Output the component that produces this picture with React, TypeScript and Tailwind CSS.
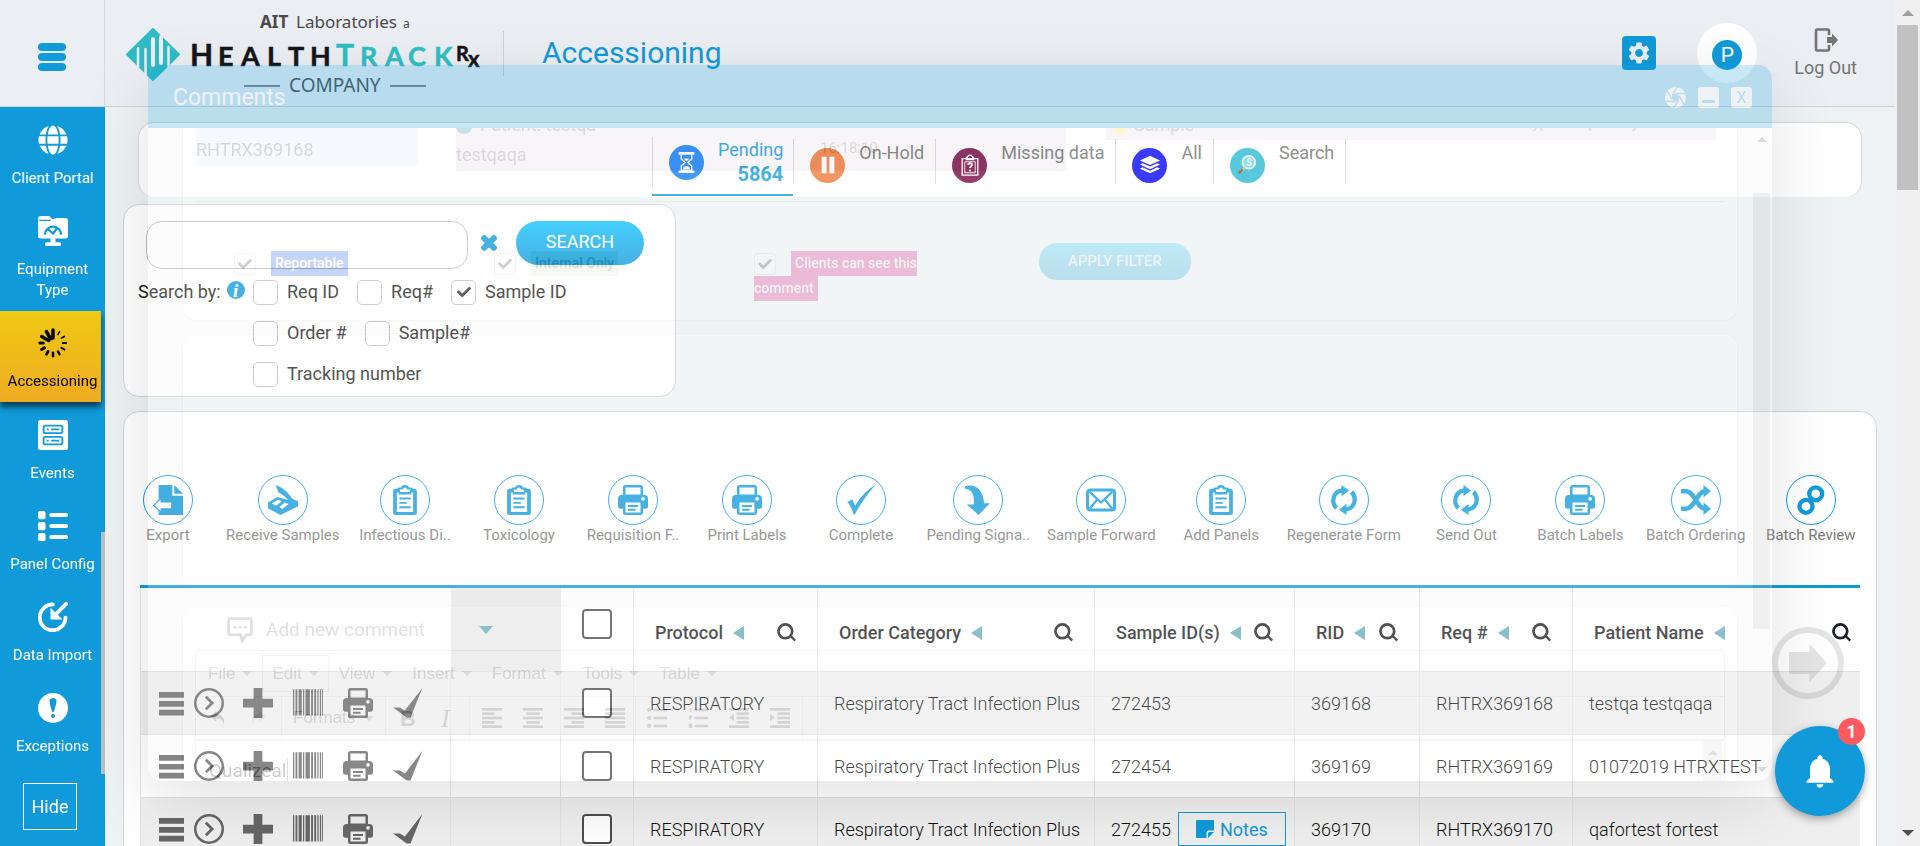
import type { ReactNode } from "react";
import { FaGlobe, FaTimes, FaCheck } from "react-icons/fa";
import { MdSettings, MdNotifications } from "react-icons/md";

/* ---------- icons ---------- */

type IconProps = { className?: string };

const Svg = ({ className, children, box = 24 }: IconProps & { children: ReactNode; box?: number }) => (
  <svg viewBox={`0 0 ${box} ${box}`} className={className} fill="currentColor" aria-hidden="true">
    {children}
  </svg>
);

const Printer = ({ className }: IconProps) => (
  <Svg className={className}>
    <path d="M6 0h12a2 2 0 0 1 2 2v6h1a3 3 0 0 1 3 3v6a2 2 0 0 1-2 2h-2v3a2 2 0 0 1-2 2H6a2 2 0 0 1-2-2v-3H2a2 2 0 0 1-2-2v-6a3 3 0 0 1 3-3h1V2a2 2 0 0 1 2-2Zm0 2v5.500h12V2Zm0 12v8h12v-8Zm14-4.500a1.500 1.500 0 1 0 0 3 1.500 1.500 0 0 0 0-3Z" fillRule="evenodd" />
    <path d="M8 16h8v1.500H8zM8 19h6v1.500H8z" />
  </Svg>
);

const Clipboard = ({ className }: IconProps) => (
  <Svg className={className}>
    <path fillRule="evenodd" d="M9 2a3 2 0 0 1 6 0h2a1 1 0 0 1 1 1h1.500A2 2 0 0 1 21.500 5v17a2 2 0 0 1-2 2h-15a2 2 0 0 1-2-2V5a2 2 0 0 1 2-2H6a1 1 0 0 1 1-1ZM8 3.500v2h8v-2h-2.500a1.500 1.500 0 0 0-3 0ZM5.500 6v15.500h13V6h-1.500v1.500H7V6Z" />
    <path d="M7.500 10h9v1.500h-9zM7.500 13.500h6V15h-6zM7.500 17h9v1.500h-9z" />
  </Svg>
);

const Refresh = ({ className }: IconProps) => (
  <Svg className={className}>
    <path d="M10.500 4.300C3 5.500 1.500 14 6 18.500" fill="none" stroke="currentColor" strokeWidth="3.400" />
    <path d="M13.500 19.700C21 18.500 22.500 10 18 5.500" fill="none" stroke="currentColor" strokeWidth="3.400" />
    <path d="M10 0 16 4.300 10 9ZM14 24 8 19.700l6-4.700Z" />
  </Svg>
);

const Check = ({ className }: IconProps) => (
  <Svg className={className}>
    <path d="M1 13.500 5 11.500l2.500 5C11 10 17 3.500 23.500 0 17 7.500 11.500 15 7 23.500H6C4.800 19.500 3.500 16 1 13.500Z" />
  </Svg>
);

const RowCheck = ({ className }: IconProps) => (
  <Svg className={className}>
    <path d="M0 15.500h5.500L9.500 18 23.500 0 14 23.500H11Z" />
  </Svg>
);

const Scanner = ({ className }: IconProps) => (
  <Svg className={className}>
    <path d="M6 0c6 2 10 6 13.500 11l4.500 2v4L10 24 0 18.500V14l7.500-4.500L16 12C14 9.500 12 8 8.500 6Z" />
    <path d="m3 14.800 5-3 3 1.200-4.500 3.500ZM9 17.500l4.500-3.500 3 1.200-5 4Z" fill="#fff" />
  </Svg>
);

const ExportFile = ({ className }: IconProps) => (
  <Svg className={className}>
    <path d="M4.500 0h11v8.500H24V24H4.500ZM17 0l7 7h-7Z" />
    <path d="M.6 16.300 6.500 10.500v3h8.500v5.600H6.500v3Z" fill="#fff" stroke="currentColor" strokeWidth="1" />
  </Svg>
);

const DownArrow = ({ className }: IconProps) => (
  <Svg className={className}>
    <path d="M1.500 1C9 -1 15.500 2 17 14.500h4.500L12.500 24 3 15.500h5.500C9.500 9 7.500 3 1.500 3Z" />
  </Svg>
);

const Envelope = ({ className }: IconProps) => (
  <Svg className={className}>
    <rect x="1.200" y="4" width="21.600" height="16" rx="2" fill="none" stroke="currentColor" strokeWidth="2.400" />
    <path d="m3 5.500 9 8.500 9-8.500M3 19l6-7.500M21 19l-6-7.500" fill="none" stroke="currentColor" strokeWidth="1.800" />
  </Svg>
);

const Shuffle = ({ className }: IconProps) => (
  <Svg className={className}>
    <path d="M0 5h4c7 0 9 14 15 14M0 19h4C11 19 13 5 19 5" fill="none" stroke="currentColor" strokeWidth="3.600" />
    <path d="M18 0l6 5-6 5ZM18 14l6 5-6 5Z" />
  </Svg>
);

const Links = ({ className }: IconProps) => (
  <Svg className={className}>
    <circle cx="15.800" cy="7" r="5.200" fill="none" stroke="currentColor" strokeWidth="3.400" />
    <circle cx="8" cy="17" r="5.200" fill="none" stroke="currentColor" strokeWidth="3.400" />
  </Svg>
);

const Magnifier = ({ className }: IconProps) => (
  <Svg className={className}>
    <circle cx="10.500" cy="10.500" r="8.700" fill="none" stroke="currentColor" strokeWidth="3.400" />
    <path d="m15.500 16.500 2-2L24 21l-2 2.500Z" />
  </Svg>
);

const SearchCoin = ({ className }: IconProps) => (
  <Svg className={className}>
    <circle cx="14" cy="9" r="7" fill="#6fd3e8" stroke="#e4f4f8" strokeWidth="2" />
    <path d="m9 13.500 1.800 1.800-4.500 4.500-2-2Z" fill="#d9b44a" />
    <path d="m6.500 16 1.500 1.500-4 4.500-2-2Z" fill="#8a4526" />
    <text x="14" y="13" textAnchor="middle" fontSize="11" fontWeight="700" fill="#e4f4f8" fontFamily="Roboto, sans-serif">$</text>
  </Svg>
);

const Hourglass = ({ className }: IconProps) => (
  <Svg className={className}>
    <path d="M3 0h18v3H3zM3 21h18v3H3z" />
    <path d="M6 3v5l4.500 4L6 16v5h12v-5l-4.500-4L18 8V3" fill="none" stroke="currentColor" strokeWidth="1.500" />
    <path d="m8.500 7.500 3.500 3 3.500-3ZM8 20c0-3 2-4 4-4s4 1 4 4Z" />
  </Svg>
);

const Pause = ({ className }: IconProps) => (
  <Svg className={className}>
    <path d="M5 3h5.500v18H5zM13.500 3H19v18h-5.500z" />
  </Svg>
);

const MissingData = ({ className }: IconProps) => (
  <Svg className={className}>
    <path d="M3.500 5h17v18h-17zM8 5c0-2 2-2 2.500-3.500h3C14 3 16 3 16 5v1H8Z" fill="none" stroke="currentColor" strokeWidth="1.500" />
    <path d="M6.300 8.500h11.400v12H6.300z" fill="none" stroke="currentColor" strokeWidth="1" />
    <path d="M10 12c0-2.500 4.200-2.500 4.200 0 0 1.500-2.200 1.300-2.200 3.300" fill="none" stroke="currentColor" strokeWidth="2" />
    <circle cx="12" cy="18" r="1.200" />
  </Svg>
);

const Layers = ({ className }: IconProps) => (
  <Svg className={className}>
    <path d="m12 2 11 5-11 5L1 7Z" />
    <path d="m4 10-3 1.500 11 5 11-5L20 10l-8 3.700Z" />
    <path d="m4 14.500-3 1.500 11 5 11-5-3-1.500-8 3.700Z" />
  </Svg>
);

const Equipment = ({ className }: IconProps) => (
  <Svg className={className}>
    <path fillRule="evenodd" d="M0 2a2 2 0 0 1 2-2h7l2.500 2.500H12l3-1h7a2 2 0 0 1 2 2V16a2 2 0 0 1-2 2h-8v3h3a1.500 1.500 0 0 1 0 3H7a1.500 1.500 0 0 1 0-3h3v-3H2a2 2 0 0 1-2-2Z" />
    <path d="M5.500 15a6.500 6.500 0 1 1 13 0M7.500 10l4.500 4 3-4" fill="none" stroke="#119ad9" strokeWidth="1.800" />
    <path d="M1 3.500h9" stroke="#119ad9" strokeWidth="1" />
  </Svg>
);

const spokes = [0, 1, 2, 3, 4, 5, 6, 7, 8, 9, 10, 11];
const Spinner = ({ className }: IconProps) => (
  <Svg className={className}>
    {spokes.map((n) => (
      <line
        key={n}
        x1="12"
        y1="1.500"
        x2="12"
        y2={n === 0 || n > 9 ? 8 : 4.2}
        stroke="currentColor"
        strokeLinecap="round"
        strokeWidth={n === 0 ? 2.8 : 1 + n * 0.17}
        transform={`rotate(${n * 30} 12 12)`}
      />
    ))}
  </Svg>
);

const Events = ({ className }: IconProps) => (
  <Svg className={className}>
    <rect width="24" height="24" rx="2" />
    <g fill="none" stroke="#119ad9" strokeWidth="1.500">
      <rect x="4.500" y="4.500" width="15" height="6" rx="1.500" />
      <rect x="4.500" y="13.500" width="15" height="6" rx="1.500" />
      <path d="M7 7.500h1.500M10.500 7.500H17M7 16.500h1.500M10.500 16.500H17" />
    </g>
  </Svg>
);

const PanelConfig = ({ className }: IconProps) => (
  <Svg className={className}>
    <rect y="0" width="6" height="6.500" rx="1.500" />
    <rect y="8.800" width="6" height="6.500" rx="1.500" />
    <rect y="17.500" width="6" height="6.500" rx="1.500" />
    <rect x="9" y="1.600" width="15" height="3.200" rx="1.600" />
    <rect x="9" y="10.400" width="15" height="3.200" rx="1.600" />
    <rect x="9" y="19.200" width="15" height="3.200" rx="1.600" />
  </Svg>
);

const DataImport = ({ className }: IconProps) => (
  <Svg className={className}>
    <path d="M12 2a10.300 10.300 0 1 0 10 10.500" fill="none" stroke="currentColor" strokeWidth="3" strokeLinecap="round" />
    <path d="M22.500 1.500 12 12" fill="none" stroke="currentColor" strokeWidth="3" strokeLinecap="round" />
    <path d="M10 4.500v9.500h9.500L16.500 11 13 7.500Z" />
  </Svg>
);

const Exceptions = ({ className }: IconProps) => (
  <Svg className={className}>
    <circle cx="12" cy="12" r="12" />
    <path d="M9.200 6c0-2.700 5.600-2.700 5.600 0 0 3-1.200 5.500-2 9h-1.600c-.8-3.500-2-6-2-9Z" fill="#119ad9" />
    <circle cx="12" cy="18.300" r="1.600" fill="#119ad9" />
  </Svg>
);

const LogOut = ({ className }: IconProps) => (
  <Svg className={className}>
    <path d="M15 7V3a1.500 1.500 0 0 0-1.500-1.500h-10A1.500 1.500 0 0 0 2 3v18a1.500 1.500 0 0 0 1.500 1.500h10A1.500 1.500 0 0 0 15 21v-4" fill="none" stroke="currentColor" strokeWidth="2.600" />
    <path d="M13 9h5V5.500l6 6.500-6 6.500V15h-5Z" />
  </Svg>
);

const ChevronCircle = ({ className }: IconProps) => (
  <Svg className={className}>
    <circle cx="12" cy="12" r="11" fill="none" stroke="currentColor" strokeWidth="2" />
    <path d="m9.500 7 5 5-5 5" fill="none" stroke="currentColor" strokeWidth="2.200" />
  </Svg>
);

const Barcode = ({ className }: IconProps) => (
  <Svg className={className}>
    <path d="M0 1h1v21H0zM2 1h1.500v21H2zM4.500 1H7v21H4.500zM8 1h1v21H8zM10 1h3.500v21H10zM14.500 1H16v21h-1.500zM17 1h1.500v21H17zM19.500 1h1v21h-1zM21.500 1h1v21h-1zM23.300 1h.7v21h-.7z" />
  </Svg>
);

const Plus = ({ className }: IconProps) => (
  <Svg className={className}>
    <path d="M8.500 0h7v8.500H24v7h-8.500V24h-7v-8.500H0v-7h8.500Z" />
  </Svg>
);

const Bars = ({ className }: IconProps) => (
  <Svg className={className}>
    <path d="M0 1h24v5.500H0zM0 9.500h24V15H0zM0 18h24v5.500H0z" />
  </Svg>
);

const Note = ({ className }: IconProps) => (
  <Svg className={className}>
    <path d="M1 0h22a1 1 0 0 1 1 1v13h-7a3 3 0 0 0-3 3v7H1a1 1 0 0 1-1-1V1a1 1 0 0 1 1-1Zm15 24v-6a2 2 0 0 1 2-2h6Z" />
  </Svg>
);

const CommentBubble = ({ className }: IconProps) => (
  <Svg className={className}>
    <path d="M3 1.500h18a1.500 1.500 0 0 1 1.500 1.500v12a1.500 1.500 0 0 1-1.500 1.500h-3L14 22l-1.500-5.500H3A1.500 1.500 0 0 1 1.500 15V3A1.500 1.500 0 0 1 3 1.500Z" fill="none" stroke="currentColor" strokeWidth="2.600" />
    <path d="M6 8h2.500v2.500H6zM10.800 8h2.500v2.500h-2.500zM15.500 8H18v2.500h-2.500z" />
  </Svg>
);

const Aperture = ({ className }: IconProps) => (
  <Svg className={className}>
    <circle cx="12" cy="12" r="12" />
    <path d="M12 7.500h11M16 10l5.500 9.500M15.500 14.500 10 24M12 16.500H1M8 14 2.500 4.500M8.500 9.500 14 0" stroke="#119ad9" strokeWidth="1.600" />
    <circle cx="12" cy="12" r="4" fill="#119ad9" />
  </Svg>
);

const Undo = ({ className }: IconProps) => (
  <Svg className={className}>
    <path d="M9 1v5c9 0 13 7 10 16 0-7-3-10-10-10v5L0 9Z" />
  </Svg>
);

const Lines = ({ className, rows }: IconProps & { rows: [number, number][] }) => (
  <Svg className={className}>
    {rows.map(([x, w], i) => (
      <rect key={i} x={x} y={i * 5.2} width={w} height="3.200" />
    ))}
  </Svg>
);

/* ---------- shared pieces ---------- */

const Tick = ({ id, checked = false, size = "md" }: { id: string; checked?: boolean; size?: "md" | "sm" | "lg" }) => {
  const box =
    size === "lg"
      ? "size-[30px] rounded border-2 border-[#4d4d4d]"
      : size === "md"
        ? "size-[25px] rounded-[5px] border border-[#bfbfbf]"
        : "size-[22px] rounded-[3px] border border-[#ccc]";
  return (
    <span className="inline-grid shrink-0 place-items-center">
      <input id={id} type="checkbox" defaultChecked={checked} aria-label={id} className={`${box} col-start-1 row-start-1 appearance-none bg-white`} />
      {checked && <FaCheck className="pointer-events-none col-start-1 row-start-1 size-[14px] text-[#333]" />}
    </span>
  );
};

const TriLeft = () => (
  <svg viewBox="0 0 11 14" className="h-[14px] w-[11px] shrink-0 fill-[#67acb7]" aria-hidden="true">
    <path d="M11 0v14L0 7Z" />
  </svg>
);

const Caret = () => (
  <svg viewBox="0 0 10 5" className="h-[5px] w-[10px] shrink-0 fill-[#999]" aria-hidden="true">
    <path d="M0 0h10L5 5Z" />
  </svg>
);

/* ---------- header ---------- */

const Logo = () => (
  <svg viewBox="0 -4 356 92" className="h-[92px] w-[356px] shrink-0 overflow-visible" role="img" aria-label="AIT Laboratories a HealthTrackRx Company">
    <path d="M26 18 52 43.500 26 69 0 43.500Z" fill="#2fbcc6" stroke="#2fbcc6" strokeWidth="2" strokeLinejoin="round" />
    <path d="M11 37v24M18.500 38v26M41.500 36v20" stroke="#ebeef3" strokeWidth="2.500" strokeLinecap="round" />
    <path d="M26 28v26M34 26v26" stroke="#ebeef3" strokeWidth="4" strokeLinecap="round" />
    <g fontFamily="'Noto Sans', sans-serif" fill="#4a4a4a">
      <text x="133" y="17" fontSize="17" fontWeight="700">AIT</text>
      <text x="169" y="17" fontSize="17">Laboratories</text>
      <text x="276" y="17" fontSize="12">a</text>
      <text x="162" y="81" fontSize="19" fill="#4b5458">COMPANY</text>
    </g>
    <path d="M117 75h36M263 75h36" stroke="#7d8588" strokeWidth="2" />
    <g fontFamily="Lato, sans-serif" fontWeight="700" fill="#15151a" stroke="#15151a" strokeWidth="0.500">
      <text x="63" y="55" fontSize="30">H</text>
      <text x="91 114 140 161 183" y="55" fontSize="27">EALTH</text>
      <g fill="#2fbfc4" stroke="#2fbfc4">
        <text x="209" y="55" fontSize="30">T</text>
        <text x="233 258 281 307" y="55" fontSize="27">RACK</text>
      </g>
      <text x="329" y="50" fontSize="20">R</text>
      <text x="341" y="56" fontSize="22">x</text>
    </g>
  </svg>
);

const Header = () => (
  <header className="flex h-[107px] shrink-0 border-b border-[#d0d4d8] bg-[#ebeef3]">
    <div className="flex w-[105px] shrink-0 items-center justify-center border-r border-[#d6d9de]">
      <button aria-label="Toggle menu" className="mt-[7px] flex flex-col gap-[2px]">
        <span className="h-[8px] w-[28px] rounded-[4px] bg-[#119ad9]" />
        <span className="h-[8px] w-[28px] rounded-[4px] bg-[#119ad9]" />
        <span className="h-[8px] w-[28px] rounded-[4px] bg-[#119ad9]" />
      </button>
    </div>
    <div className="flex flex-1 items-center pr-[38px] pl-[22px]">
      <Logo />
      <div className="ml-[20px] h-[45px] w-px bg-[#ccd0d4]" />
      <h1 className="ml-[38px] text-[30px] leading-[36px] text-[#119ad9]">Accessioning</h1>
      <div className="ml-auto flex items-center">
        <button aria-label="Settings" className="flex size-[34px] items-center justify-center rounded bg-[#119ad9] text-[#ebeef3]">
          <MdSettings className="size-[26px]" />
        </button>
        <div className="ml-[41px] flex size-[60px] items-center justify-center rounded-full bg-white">
          <span className="mt-[4px] flex size-[30px] items-center justify-center rounded-full bg-[#119ad9] text-[21px] leading-none text-white">P</span>
        </div>
        <button className="ml-[37px] flex flex-col items-center gap-[4px] pt-[2px] text-[18px] leading-[24px] text-[#747474]">
          <LogOut className="size-[24px]" />
          Log Out
        </button>
      </div>
    </div>
  </header>
);

/* ---------- sidebar ---------- */

const navItems = [
  { label: "Client Portal", icon: FaGlobe },
  { label: "Equipment Type", icon: Equipment },
  { label: "Accessioning", icon: Spinner, active: true },
  { label: "Events", icon: Events },
  { label: "Panel Config", icon: PanelConfig },
  { label: "Data Import", icon: DataImport },
  { label: "Exceptions", icon: Exceptions },
];

const Sidebar = () => (
  <nav className="relative z-20 flex w-[105px] shrink-0 flex-col items-start bg-[#119ad9] pt-px text-white">
    {navItems.map(({ label, icon: Icon, active }) => (
      <a
        key={label}
        href="#"
        className={
          active
            ? "mb-px flex w-[101px] flex-col items-center bg-linear-to-b from-[#efc911] to-[#efab22] pt-[17px] pb-[10px] pl-[4px] text-black shadow-[0_5px_6px_rgba(0,0,0,0.6)]"
            : "flex w-[105px] flex-col items-center pt-[17px] pb-[10px]"
        }
      >
        <Icon className="size-[30px]" />
        <span className="mt-[13px] max-w-[92px] text-center text-[15px] leading-[21px]">{label}</span>
      </a>
    ))}
    <button className="mt-[16px] ml-[23px] h-[47px] w-[54px] border border-white text-[18px]">Hide</button>
    <div className="absolute top-[425px] right-0 h-[242px] w-[4px] bg-[#b9bdc0]" />
  </nav>
);

/* ---------- status tabs ---------- */

const tabs = [
  { label: "On-Hold", icon: Pause, color: "bg-[#ee7936]" },
  { label: "Missing data", icon: MissingData, color: "bg-[#74053f]" },
  { label: "All", icon: Layers, color: "bg-[#0000ff]" },
  { label: "Search", icon: SearchCoin, color: "bg-[#27b9d4]" },
];

const StatusTabs = () => (
  <section className="mx-[15px] flex h-[75px] justify-start rounded-[16px] border-x border-t border-[#d3d8d8] bg-white pl-[513px]">
    <button className="flex h-[73px] items-start border-b-2 border-[#119ad9] pt-[14px]">
      <span className="flex h-[50px] items-center gap-[14px] border-l border-[#d6d6d6] pr-[10px] pl-[16px]">
        <span className="flex size-[35px] items-center justify-center rounded-full bg-[#0a7cf9] text-white">
          <Hourglass className="size-[21px]" />
        </span>
        <span className="flex flex-col items-end text-[18px] leading-[24px] text-[#119ad9]">
          Pending
          <b className="text-[20px] font-bold">5864</b>
        </span>
      </span>
    </button>
    {tabs.map(({ label, icon: Icon, color }) => (
      <button key={label} className="mt-[16px] flex h-[45px] items-center gap-[14px] border-l border-[#d6d6d6] pr-[11px] pl-[16px] last:border-r">
        <span className={`mt-[7px] flex size-[35px] items-center justify-center rounded-full text-white ${color}`}>
          <Icon className="size-[22px]" />
        </span>
        <span className="self-start pt-[2px] text-[18px] leading-[24px] text-[#6f6f6f]">{label}</span>
      </button>
    ))}
  </section>
);

/* ---------- search ---------- */

const searchRows = [
  [
    { id: "Req ID", on: false },
    { id: "Req#", on: false },
    { id: "Sample ID", on: true },
  ],
  [
    { id: "Order #", on: false },
    { id: "Sample#", on: false },
  ],
  [{ id: "Tracking number", on: false }],
];

const SearchCard = () => (
  <section className="mt-[7px] h-[193px] w-[553px] rounded-[16px] border border-[#cfd3d3] bg-white pt-[16px] pl-[14px]">
    <div className="flex items-center pl-[8px]">
      <input type="text" aria-label="Search" className="h-[48px] w-[322px] rounded-[16px] border border-[#bfbfbf] bg-white px-4 text-[18px]" />
      <button aria-label="Clear search" className="mb-[4px] ml-[11px] text-[#119ad9]">
        <FaTimes className="size-[20px] stroke-[#119ad9] stroke-[60px]" />
      </button>
      <button className="mb-[4px] ml-[17px] h-[44px] w-[128px] rounded-[22px] bg-linear-to-b from-[#0dc3ff] to-[#1199d8] pb-[3px] text-[18px] text-white">SEARCH</button>
    </div>
    <div className="mt-[10px] flex text-[18px] leading-[26px] text-[#222]">
      <div className="flex w-[115px] shrink-0 items-start gap-[6px]">
        Search by:
        <span className="mt-[2px] flex size-[18px] items-center justify-center rounded-full bg-[#119ad9] font-['Liberation_Serif',serif] text-[19px] leading-none font-bold text-white italic">i</span>
      </div>
      <div className="flex flex-col gap-[15px]">
        {searchRows.map((row, i) => (
          <div key={i} className="flex gap-[18px]">
            {row.map(({ id, on }) => (
              <label key={id} htmlFor={id} className="flex gap-[9px]">
                <Tick id={id} checked={on} />
                {id}
              </label>
            ))}
          </div>
        ))}
      </div>
    </div>
  </section>
);

/* ---------- work list ---------- */

const actions = [
  { label: "Export", icon: ExportFile },
  { label: "Receive Samples", icon: Scanner },
  { label: "Infectious Di..", icon: Clipboard },
  { label: "Toxicology", icon: Clipboard },
  { label: "Requisition F..", icon: Printer },
  { label: "Print Labels", icon: Printer },
  { label: "Complete", icon: Check },
  { label: "Pending Signa..", icon: DownArrow },
  { label: "Sample Forward", icon: Envelope },
  { label: "Add Panels", icon: Clipboard },
  { label: "Regenerate Form", icon: Refresh },
  { label: "Send Out", icon: Refresh },
  { label: "Batch Labels", icon: Printer },
  { label: "Batch Ordering", icon: Shuffle },
  { label: "Batch Review", icon: Links },
];

const Actions = () => (
  <div className="-ml-[13px] flex gap-[17px] pt-[63px]">
    {actions.map(({ label, icon: Icon }) => (
      <button key={label} className="flex min-w-[97px] flex-col items-center text-[15px] leading-[20px] whitespace-nowrap text-[#7a7a7a] first:min-w-[82px]">
        <span className="flex size-[50px] items-center justify-center rounded-full border border-[#119ad9] text-[#119ad9]">
          <Icon className="size-[30px]" />
        </span>
        {label}
      </button>
    ))}
  </div>
);

const columns = ["Protocol", "Order Category", "Sample ID(s)", "RID", "Req #", "Patient Name"];

const rows = [
  { sample: "272453", rid: "369168", req: "RHTRX369168", patient: "testqa testqaqa" },
  { sample: "272454", rid: "369169", req: "RHTRX369169", patient: "01072019 HTRXTEST" },
  { sample: "272455", rid: "369170", req: "RHTRX369170", patient: "qafortest fortest", notes: true },
];

const WorkTable = () => (
  <table className="mt-[40px] w-full table-fixed border-collapse border-t-[3px] border-[#119ad9]">
    <colgroup>
      <col className="w-[310px]" />
      <col className="w-[110px]" />
      <col className="w-[73px]" />
      <col className="w-[184px]" />
      <col className="w-[277px]" />
      <col className="w-[200px]" />
      <col className="w-[125px]" />
      <col className="w-[153px]" />
      <col />
    </colgroup>
    <thead>
      <tr className="h-[85px]">
        <th aria-label="Actions" className="border-l border-[#e4e4e4]" />
        <th className="bg-[#e9e9e9]">
          <svg viewBox="0 0 14 8" className="ml-[28px] h-[8px] w-[14px] fill-[#67acb7]" aria-hidden="true">
            <path d="M0 0h14L7 8Z" />
          </svg>
        </th>
        <th className="border-r border-[#e4e4e4] pb-[5px] text-center align-middle">
          <Tick id="Select all" size="lg" />
        </th>
        {columns.map((name) => (
          <th key={name} className="border-r border-[#e4e4e4] px-[21px] pt-[6px] text-left last:border-r-0 last:pr-[9px]">
            <div className="flex items-center text-[18px] font-medium whitespace-nowrap text-[#1d1f26]">
              {name}
              <span className="ml-[10px]">
                <TriLeft />
              </span>
              <button aria-label={`Filter ${name}`} className="ml-auto">
                <Magnifier className="size-[19px]" />
              </button>
            </div>
          </th>
        ))}
      </tr>
    </thead>
    <tbody className="text-[18px] font-light whitespace-nowrap text-[#111]">
      {rows.map((r) => (
        <tr key={r.sample} className="h-[63px] odd:bg-[#efefef] odd:[border-block:1px_solid_#e0e0e0]">
          <td className="border-x border-[#e4e4e4] pl-[18px]">
            <div className="flex items-center text-[#666]">
              <button aria-label="Row menu"><Bars className="size-[25px]" /></button>
              <button aria-label="Open" className="ml-[10px]"><ChevronCircle className="size-[30px]" /></button>
              <button aria-label="Add" className="ml-[19px]"><Plus className="size-[30px]" /></button>
              <button aria-label="Barcode" className="ml-[20px]"><Barcode className="size-[30px]" /></button>
              <button aria-label="Print" className="ml-[20px]"><Printer className="size-[30px]" /></button>
              <button aria-label="Complete" className="ml-[20px]"><RowCheck className="size-[30px]" /></button>
            </div>
          </td>
          <td className="border-x border-[#e4e4e4]" />
          <td className="border-r border-[#e4e4e4] text-center align-middle">
            <div className="flex justify-center"><Tick id={`Select ${r.sample}`} size="lg" /></div>
          </td>
          <td className="border-r border-[#e4e4e4] pl-[16px]">RESPIRATORY</td>
          <td className="border-r border-[#e4e4e4] pl-[16px]">Respiratory Tract Infection Plus</td>
          <td className="border-r border-[#e4e4e4] pl-[16px]">
            <div className="flex items-center gap-[7px]">
              {r.sample}
              {r.notes && (
                <button className="flex h-[34px] w-[108px] items-center justify-center gap-[6px] border border-[#119ad9] text-[18px] font-normal text-[#119ad9]">
                  <Note className="size-[18px]" />
                  Notes
                </button>
              )}
            </div>
          </td>
          <td className="border-r border-[#e4e4e4] pl-[16px]">{r.rid}</td>
          <td className="border-r border-[#e4e4e4] pl-[16px]">{r.req}</td>
          <td className="pl-[16px]">{r.patient}</td>
        </tr>
      ))}
    </tbody>
  </table>
);

/* ---------- comments dialog ---------- */

const menus = ["File", "Edit", "View", "Insert", "Format", "Tools", "Table"];

const alignLeft: [number, number][] = [[0, 24], [0, 15], [0, 24], [0, 15], [0, 24]];
const alignCenter: [number, number][] = [[0, 24], [4, 16], [0, 24], [4, 16], [0, 24]];
const alignRight: [number, number][] = [[0, 24], [9, 15], [0, 24], [9, 15], [0, 24]];
const justify: [number, number][] = [[0, 24], [0, 24], [0, 24], [0, 24], [0, 24]];
const outdent: [number, number][] = [[0, 24], [9, 15], [9, 15], [9, 15], [0, 24]];

const CommentsDialog = () => (
  <div
    role="dialog"
    aria-label="Comments"
    className="absolute inset-x-[148px] top-[65px] z-10 flex h-[716px] flex-col rounded-[14px] bg-[#f0f0f0] opacity-23 shadow-[0_20px_70px_rgba(0,0,0,0.5)]"
  >
    <div className="flex h-[63px] shrink-0 items-center rounded-t-[14px] bg-[#119ad9] pr-[20px] pl-[25px] text-white">
      <h2 className="pt-[3px] text-[23px]">Comments</h2>
      <div className="ml-auto flex items-center gap-[12px] pt-[2px]">
        <button aria-label="Capture"><Aperture className="size-[21px]" /></button>
        <button aria-label="Minimise" className="flex size-[21px] items-end justify-center rounded-[3px] bg-white pb-[5px]">
          <span className="h-[3px] w-[13px] bg-[#119ad9]" />
        </button>
        <button aria-label="Close" className="flex size-[21px] items-center justify-center rounded-[3px] bg-white text-[16px] leading-none text-[#119ad9]">X</button>
      </div>
    </div>
    <div className="flex min-h-0 flex-1 overflow-hidden rounded-b-[14px]">
      <div className="flex min-w-0 flex-1 flex-col overflow-hidden pr-[15px] pl-[34px]">
        <section className="h-[193px] shrink-0 overflow-hidden rounded-b-[14px] border border-t-0 border-[#ddd] bg-white px-[13px]">
          <div className="flex h-[73px] items-start text-[18px] leading-[30px] whitespace-nowrap text-[#555]">
            <div className="h-[38px] w-[222px] shrink-0 bg-[#d8e8ff] pt-[7px]">RHTRX369168</div>
            <div className="ml-[38px] grid h-[43px] w-[610px] shrink-0 grid-cols-[206px_158px_1fr] bg-[#dad1dd]">
              <div className="-mt-[18px]">
                <span className="mr-2 inline-block size-[16px] rounded-full bg-[#1a7a96] align-middle" />
                Patient: testqa
                <br />
                testqaqa
              </div>
              <div className="-mt-[19px] text-[15px] leading-[26px]">DOB: 2022-07-01</div>
              <div className="-mt-[19px] text-[15px] leading-[26px]">
                Collection Date: 2022-07-19
                <br />
                16:18:10
              </div>
            </div>
            <div className="ml-[40px] grid h-[12px] w-[610px] shrink-0 grid-cols-[202px_210px_1fr] bg-[#dad1dd] pl-[6px]">
              <div className="-mt-[18px]">
                <span className="mr-[6px] inline-block size-[16px] rounded-full bg-[#f5e01e] align-middle" />
                Sample
              </div>
              <div className="-mt-[20px] text-[15px]">Name: 272453</div>
              <div className="-mt-[20px] text-[15px]">Type: Respiratory</div>
            </div>
          </div>
          <div className="border-t border-[#ccc]" />
          <div className="flex items-start pt-[49px] pl-[38px] text-[14px] leading-[25px] font-medium text-[#f4f4f4]">
            <label className="flex w-[260px] items-center gap-[15px]">
              <Tick id="Reportable" checked size="sm" />
              <span className="bg-[#0044e5] px-[4px]">Reportable</span>
            </label>
            <label className="flex w-[260px] items-center gap-[15px]">
              <Tick id="Internal Only" checked size="sm" />
              <span className="bg-[#cfe3cf] px-[4px] text-[#555]">Internal Only</span>
            </label>
            <div className="w-[285px]">
              <label className="flex items-center gap-[15px]">
                <Tick id="Clients can see this comment" checked size="sm" />
                <span className="bg-[#de007e] pl-[4px]">Clients can see this</span>
              </label>
              <span className="inline-block bg-[#de007e] pr-[4px]">comment</span>
            </div>
            <button className="-mt-[8px] h-[37px] w-[152px] rounded-[18px] bg-linear-to-b from-[#1bd0ff] to-[#1199d8] text-[15px]">APPLY FILTER</button>
          </div>
        </section>
        <section className="mt-[12px] h-[259px] shrink-0 rounded-[14px] border border-[#ddd] bg-white" />
        <section className="mt-[13px] h-[300px] shrink-0 rounded-t-[14px] border border-[#ddd] bg-white px-[12px] text-[#777]">
          <div className="flex h-[44px] items-center gap-[13px] pt-[4px] pl-[32px] text-[19px]">
            <CommentBubble className="size-[26px]" />
            Add new comment
          </div>
          <div className="border border-[#ccc] font-['Liberation_Sans',sans-serif] text-[17px]">
            <div className="flex h-[46px] items-center border-b border-[#ddd] pl-[2px]">
              {menus.map((m) => (
                <button key={m} className={`flex h-[37px] items-center gap-[7px] border px-[9px] ${m === "Edit" ? "border-[#ccc]" : "border-transparent"}`}>
                  {m}
                  <Caret />
                </button>
              ))}
            </div>
            <div className="flex h-[44px] items-center border-b-2 border-[#ccc]">
              <div className="flex h-full w-[86px] items-center gap-[22px] border-r border-[#ddd] pl-[14px]">
                <Undo className="size-[17px]" />
                <Undo className="size-[17px] -scale-x-100 opacity-40" />
              </div>
              <div className="flex h-full w-[104px] items-center gap-[9px] border-r border-[#ddd] pl-[11px]">
                Formats
                <Caret />
              </div>
              <div className="flex h-full w-[84px] items-center gap-[25px] border-r border-[#ddd] pl-[14px] text-[22px]">
                <b>B</b>
                <i className="font-['Liberation_Serif',serif] text-[26px]">I</i>
              </div>
              <div className="flex h-full w-[166px] items-center gap-[21px] border-r border-[#ddd] pl-[12px]">
                <Lines rows={alignLeft} className="size-5" />
                <Lines rows={alignCenter} className="size-5" />
                <Lines rows={alignRight} className="size-5" />
                <Lines rows={justify} className="size-5" />
              </div>
              <div className="flex h-full items-center gap-[21px] border-r border-[#ddd] pr-[12px] pl-[11px]">
                <Svg className="size-5">
                  <path d="M8 1h16v3H8zM8 10.500h16v3H8zM8 20h16v3H8z" />
                  <circle cx="2.500" cy="2.500" r="2.500" /><circle cx="2.500" cy="12" r="2.500" /><circle cx="2.500" cy="21.500" r="2.500" />
                </Svg>
                <Svg className="size-5">
                  <path d="M8 1h16v3H8zM8 10.500h16v3H8zM8 20h16v3H8zM2 0h2v5H2zM1 9h4v2L3 14H1zM1 19h4v5H1z" />
                </Svg>
                <span className="inline-grid">
                  <Lines rows={outdent} className="col-start-1 row-start-1 size-5" />
                  <Svg className="col-start-1 row-start-1 size-5"><path d="M6 7v9l-6-4.500Z" /></Svg>
                </span>
                <span className="inline-grid">
                  <Lines rows={outdent} className="col-start-1 row-start-1 size-5" />
                  <Svg className="col-start-1 row-start-1 size-5"><path d="M0 7v9l6-4.500Z" /></Svg>
                </span>
              </div>
            </div>
            <div className="flex h-[140px] items-start justify-between pr-[2px] pl-[13px] font-['Roboto',sans-serif]">
              <span className="mt-[18px] border-r border-[#777] pr-px text-[19px] leading-[24px] text-[#222]">Qualizeal</span>
              <span className="flex h-full w-[19px] justify-center bg-[#ddd] pt-[9px]">
                <span className="size-0 border-x-[5px] border-b-[5px] border-x-transparent border-b-[#777]" />
              </span>
            </div>
          </div>
        </section>
      </div>
      <div className="flex w-[19px] shrink-0 flex-col items-center justify-between border-r-2 border-[#f8f8f8] py-[9px]">
        <span className="size-0 border-x-[5px] border-b-[5px] border-x-transparent border-b-[#555]" />
        <span className="mt-[51px] mb-auto h-[436px] w-[17px] bg-[#bdbdbd]" />
        <span className="size-0 border-x-[5px] border-t-[5px] border-x-transparent border-t-[#555]" />
      </div>
    </div>
  </div>
);

/* ---------- page ---------- */

export default function App() {
  return (
    <div className="relative flex h-screen overflow-hidden bg-[#eef2f2] font-['Roboto',sans-serif]">
      <div className="flex min-w-0 flex-1 flex-col">
        <Header />
        <div className="flex min-h-0 flex-1">
          <Sidebar />
          <main className="min-w-0 flex-1 overflow-hidden pt-[15px] pr-[18px] pl-[18px]">
            <StatusTabs />
            <SearchCard />
            <section className="mt-[14px] rounded-t-[16px] border border-[#cfd3d3] bg-white px-[16px]">
              <Actions />
              <WorkTable />
            </section>
          </main>
        </div>
      </div>
      <div className="flex w-[25px] shrink-0 flex-col items-center justify-between bg-[#f0f0f0] py-[10px]">
        <span className="size-0 border-x-[6px] border-b-[6px] border-x-transparent border-b-[#a0a0a0]" />
        <span className="mt-[9px] mb-auto h-[165px] w-[21px] bg-[#c1c1c1]" />
        <span className="size-0 border-x-[6px] border-t-[6px] border-x-transparent border-t-[#505050]" />
      </div>

      <CommentsDialog />

      <button aria-label="Next" className="absolute top-[627px] right-[76px] z-20 flex size-[72px] items-center justify-center rounded-full border-[6px] border-black text-black opacity-10">
        <Svg className="size-[38px]"><path d="M0 5h13V0l11 12-11 12v-5H0Z" /></Svg>
      </button>
      <button aria-label="Notifications" className="absolute top-[726px] right-[55px] z-30 flex size-[90px] items-center justify-center rounded-full bg-[#119ad9] text-white shadow-[0_3px_8px_rgba(0,0,0,0.35)]">
        <MdNotifications className="size-[40px]" />
        <span className="absolute -top-[8px] right-0 flex size-[27px] items-center justify-center rounded-full bg-[#ff5a5f] text-[18px] leading-none font-bold">1</span>
      </button>
    </div>
  );
}
